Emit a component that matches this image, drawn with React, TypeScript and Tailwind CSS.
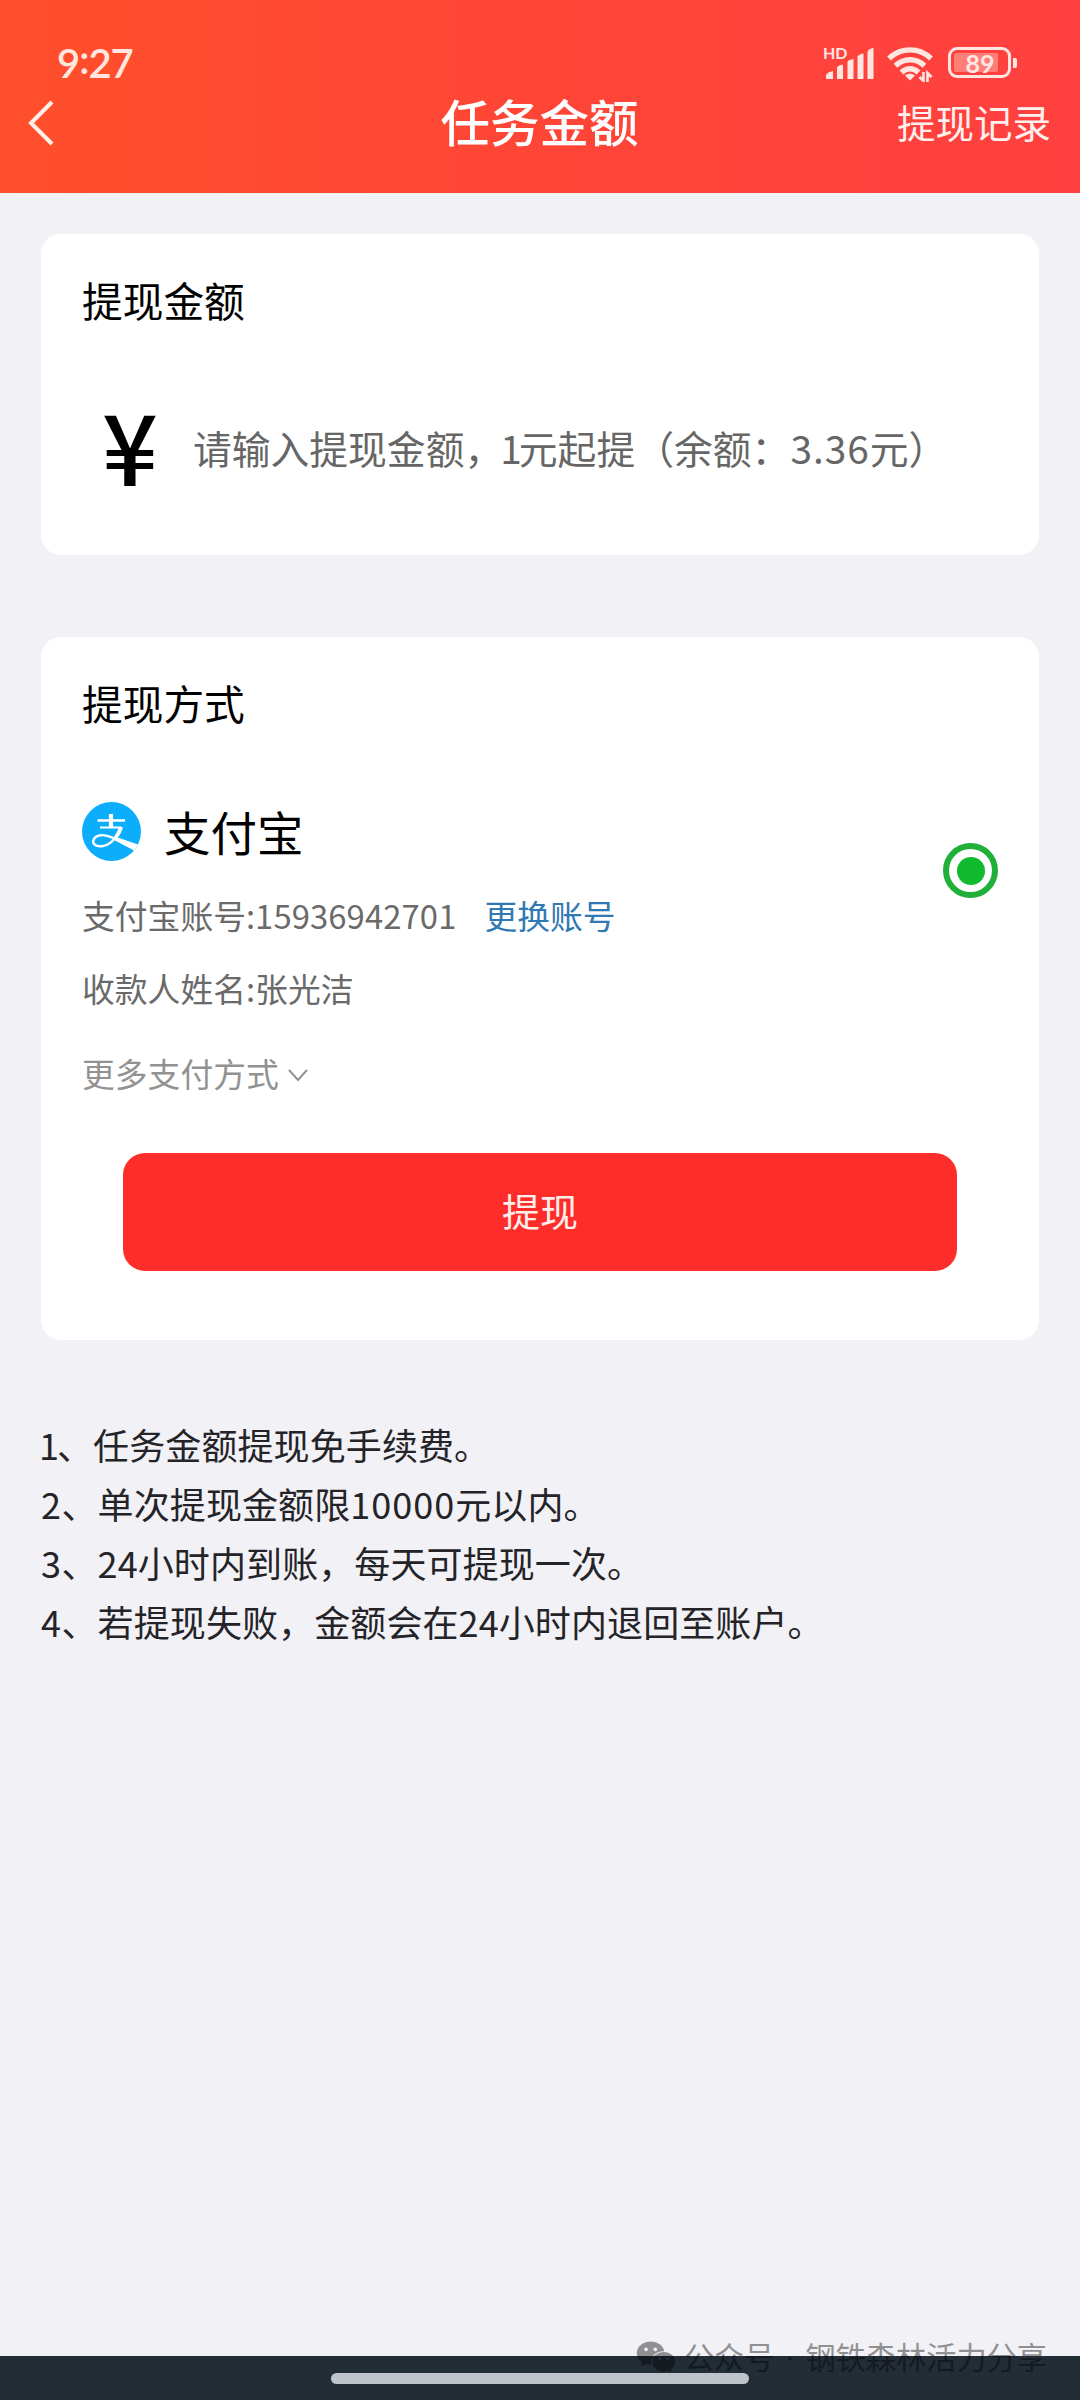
import { AiFillWechat } from "react-icons/ai";

const notes = [
  { no: "1", narrow: true, text: "、任务金额提现免手续费。" },
  { no: "2", narrow: false, text: "、单次提现金额限", digits: "10000", rest: "元以内。" },
  { no: "3", narrow: false, text: "、24小时内到账，每天可提现一次。" },
  { no: "4", narrow: false, text: "、若提现失败，金额会在24小时内退回至账户。" },
];

const SignalIcon = () => (
  <svg className="block h-[32px] w-[50px]" viewBox="0 0 50 32" fill="#ffe6e1">
    <path d="M2 32V29C2 26.500 5 25 9 24V32Z" />
    <path d="M13 32V21C13 19 16 18 19 17.500V32Z" />
    <path d="M23.500 32V15C23.500 13.500 26 12.500 29.500 12V32Z" />
    <path d="M33.500 32V10C33.500 8.500 36 7 39.500 6.500V32Z" />
    <path d="M43.500 32V5C43.500 3 46 1.500 49.500 1V32Z" />
  </svg>
);

const WifiIcon = () => (
  <svg className="block h-[35px] w-[46px]" viewBox="0 0 46 35" fill="none" stroke="#ffe6e1" strokeWidth="5.4">
    <path d="M2 11.5C14 0 32 0 44 11.5" />
    <path d="M8.5 18.8C17 10.8 29 10.8 37.5 18.8" />
    <path d="M14.5 25.5C19.5 20.5 26.5 20.500 31.5 25.5" />
    <path d="M18 28.500C21 26 25 26 28 28.500L23 33.5Z" fill="#ffe6e1" stroke="none" />
    <path d="M36.500 25V34L32.5 30M40.500 35V26L44.500 30" strokeWidth="2.6" />
  </svg>
);

const BatteryIcon = () => (
  <div className="flex items-center gap-[2px]">
    <div className="flex h-[31px] w-[63px] rounded-[9px] border-[3px] border-[#ffe6e1] p-[3px]">
      <div className="flex h-full w-[44px] items-center justify-center rounded-[2px] bg-[#ff7f78]">
        <span className="pl-[8px] font-['Lato','Noto_Sans_CJK_SC',sans-serif] text-[25px] leading-[18px] font-bold text-[#ffe6e1]">
          89
        </span>
      </div>
    </div>
    <div className="h-[10px] w-[4px] rounded-r-[2px] bg-[#ffe6e1]" />
  </div>
);

const AlipayIcon = () => (
  <svg className="block h-[59px] w-[59px]" viewBox="0 0 59 59">
    <defs>
      <clipPath id="alipay-clip">
        <circle cx="29.5" cy="29.5" r="29.5" />
      </clipPath>
    </defs>
    <circle cx="29.5" cy="29.5" r="29.5" fill="#0cadfb" />
    <g clipPath="url(#alipay-clip)" fill="none" stroke="#fff">
      <path d="M15.5 18.5H43" strokeWidth="2.4" />
      <path d="M29 12V26" strokeWidth="4.2" />
      <path d="M18 25.5H39" strokeWidth="2.2" />
      <path d="M38.5 25.5C36 33 30 43 20 44.2C13 45 9.5 41 12 36.8C14.500 32.500 22 31.800 31 35.800" strokeWidth="2.4" />
      <path d="M37.500 24.400L41 25.500C39.500 30 38 33 35.700 35.600L59 43.500L56 50.500L30 37C33.500 33.500 35.500 29 37.500 24.400Z" fill="#fff" stroke="none" />
    </g>
  </svg>
);

const App = () => {
  return (
    <div className="relative flex h-[2400px] w-[1080px] flex-col overflow-hidden bg-[#f2f1f6] font-['Noto_Sans_CJK_SC',sans-serif] text-black">
      {/* Header */}
      <header className="h-[193px] bg-linear-to-r from-[#ff4f2b] via-[#ff4536] to-[#ff4040]">
        <div className="flex h-[92px] items-start justify-between pt-[38px] pr-[63px] pl-[57px]">
          <div className="mt-[1px] font-['Lato','Noto_Sans_CJK_SC',sans-serif] text-[40px] leading-[48px] font-semibold tracking-[-1px] text-[#ffe6de]">
            9<span className="relative -top-[4px]">:</span>27
          </div>
          <div className="flex items-start pt-[9px]">
            <div className="relative">
              <SignalIcon />
              <span className="absolute -top-[2px] -left-[1px] font-['Lato','Noto_Sans_CJK_SC',sans-serif] text-[16px] leading-[16px] font-bold text-[#ffe6e1]">
                HD
              </span>
            </div>
            <div className="ml-[13px]">
              <WifiIcon />
            </div>
            <div className="ml-[15px]">
              <BatteryIcon />
            </div>
          </div>
        </div>
        <div className="grid h-[60px] grid-cols-3 items-center pr-[29px] pl-[28px]">
          <svg className="mt-[2px] block h-[46px] w-[26px]" viewBox="0 0 26 46" fill="none" stroke="#fff0ea" strokeWidth="4">
            <path d="M24 2L3 23L24 44" />
          </svg>
          <h1 className="-mt-[3px] text-center text-[49.500px] leading-[60px] font-medium text-white">任务金额</h1>
          <span className="-mt-[2px] text-right text-[38.500px] leading-[60px] text-[#fff0ee]">提现记录</span>
        </div>
      </header>

      <main className="px-[41px] pt-[41px]">
        {/* Amount */}
        <section className="h-[321px] rounded-[20px] bg-white px-[41px] pt-[36px]">
          <h2 className="text-[40.700px] leading-[60px]">提现金额</h2>
          <div className="mt-[58px] flex h-[120px] items-center">
            <span className="-mt-[11px] ml-[20px] text-[98px] leading-[120px] font-medium">¥</span>
            <p className="-mt-[2px] ml-[35px] text-[38.800px] leading-[60px] whitespace-nowrap text-[#666]">
              请输入提现金额，<span className="-ml-[3px] tracking-[-3px]">1</span>元起提（余额：
              <span className="tracking-[1px]">3.36</span>元）
            </p>
          </div>
        </section>

        {/* Payment method */}
        <section className="mt-[82px] h-[703px] rounded-[20px] bg-white px-[41px] pt-[36px]">
          <h2 className="text-[40.700px] leading-[60px]">提现方式</h2>
          <div className="mt-[52px] flex items-start justify-between">
            <div>
              <div className="flex h-[92px] items-center">
                <AlipayIcon />
                <span className="ml-[23px] text-[46.500px] leading-[92px]">支付宝</span>
              </div>
              <div className="mt-[13px] flex text-[32.800px] leading-[50px] text-[#6a6a6a]">
                <span>
                  支付宝账号:<span className="tracking-[0.1px]">15936942701</span>
                </span>
                <a className="ml-[28px] text-[#3079b4]">更换账号</a>
              </div>
              <p className="mt-[23px] text-[32.800px] leading-[50px] text-[#6a6a6a]">收款人姓名:张光洁</p>
              <div className="mt-[35px] flex items-center text-[32.800px] leading-[50px] text-[#929292]">
                更多支付方式
                <svg className="mt-[3px] ml-[9px] block h-[14px] w-[20px]" viewBox="0 0 20 14" fill="none" stroke="#929292" strokeWidth="2">
                  <path d="M1 2L10 12L19 2" />
                </svg>
              </div>
            </div>
            <div className="mt-[58px] flex size-[55px] items-center justify-center rounded-full border-[6px] border-[#20b03a]">
              <div className="size-[28px] rounded-full bg-[#0fbb2c]" />
            </div>
          </div>
          <button className="mx-[41px] mt-[55px] block h-[118px] w-[834px] rounded-[22px] bg-[#ff2d2a] pb-[5px] text-[38px] text-[#ffeeec]">
            提现
          </button>
        </section>

        {/* Notes */}
        <ul className="mt-[75px] text-[36px] leading-[59px] tracking-[0.1px] text-[#242428]">
          {notes.map((note) => (
            <li key={note.no} className="whitespace-nowrap">
              <span className={note.narrow ? "-ml-[2px] tracking-[-2px]" : "tracking-[0.5px]"}>{note.no}</span>
              {note.text}
              {note.digits && <span className="tracking-[1px]">{note.digits}</span>}
              {note.rest}
            </li>
          ))}
        </ul>
      </main>

      {/* Navigation bar */}
      <footer className="mt-auto flex h-[44px] justify-center bg-[#222d35] pt-[17px]">
        <div className="h-[11px] w-[418px] rounded-full bg-[#bfc3ca]" />
      </footer>

      {/* Watermark */}
      <div className="absolute right-[33px] bottom-[22px] flex h-[44px] items-center text-black opacity-40">
        <AiFillWechat className="mt-[1px] size-[44px]" />
        <span className="ml-[6px] flex text-[30.200px] leading-[44px]">
          <span>公众号</span>
          <span className="w-[31px] text-center font-['Liberation_Sans',sans-serif]">·</span>
          <span>钢铁森林活力分享</span>
        </span>
      </div>
    </div>
  );
};

export default App;
